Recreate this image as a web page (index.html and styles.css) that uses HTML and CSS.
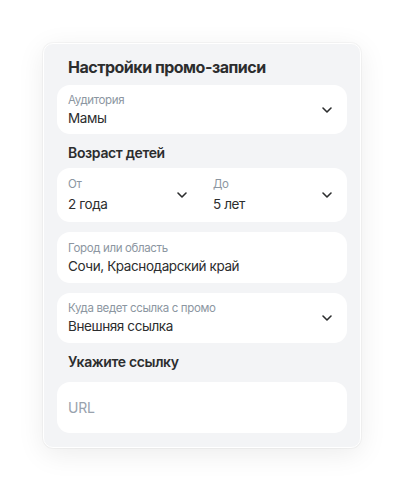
FILE: index.html
```html
<!DOCTYPE html>
<html lang="ru">
<head>
<meta charset="utf-8">
<link rel="stylesheet" href="styles.css">
</head>
<body>
<div class="card">
  <h1 class="title">Настройки промо-записи</h1>
  <div class="field select f-aud">
    <div class="texts">
      <div class="label">Аудитория</div>
      <div class="value">Мамы</div>
    </div>
    <svg class="chev" width="12" height="8" viewBox="0 0 12 8"><path d="M2 2 6 6l4-4" fill="none" stroke="#2c2d2e" stroke-width="1.6" stroke-linecap="round" stroke-linejoin="round"/></svg>
  </div>
  <h2 class="sub s-age">Возраст детей</h2>
  <div class="field row f-age">
    <div class="half">
      <div class="texts">
        <div class="label">От</div>
        <div class="value">2 года</div>
      </div>
      <svg class="chev" width="12" height="8" viewBox="0 0 12 8"><path d="M2 2 6 6l4-4" fill="none" stroke="#2c2d2e" stroke-width="1.6" stroke-linecap="round" stroke-linejoin="round"/></svg>
    </div>
    <div class="half">
      <div class="texts">
        <div class="label">До</div>
        <div class="value">5 лет</div>
      </div>
      <svg class="chev" width="12" height="8" viewBox="0 0 12 8"><path d="M2 2 6 6l4-4" fill="none" stroke="#2c2d2e" stroke-width="1.6" stroke-linecap="round" stroke-linejoin="round"/></svg>
    </div>
  </div>
  <div class="field f-city">
    <div class="texts">
      <div class="label">Город или область</div>
      <div class="value">Сочи, Краснодарский край</div>
    </div>
  </div>
  <div class="field select f-link">
    <div class="texts">
      <div class="label">Куда ведет ссылка с промо</div>
      <div class="value">Внешняя ссылка</div>
    </div>
    <svg class="chev" width="12" height="8" viewBox="0 0 12 8"><path d="M2 2 6 6l4-4" fill="none" stroke="#2c2d2e" stroke-width="1.6" stroke-linecap="round" stroke-linejoin="round"/></svg>
  </div>
  <h2 class="sub s-url">Укажите ссылку</h2>
  <div class="field f-url">
    <div class="placeholder">URL</div>
  </div>
</div>
</body>
</html>
```
FILE: styles.css
```css
* { box-sizing: border-box; }
html, body { margin: 0; padding: 0; background: #ffffff; }
body {
  font-family: Inter, "Noto Sans", sans-serif;
  color: #2c2d2e;
  width: 404px;
  height: 491px;
  padding: 43px 0 0 43px;
}
.card {
  width: 318px;
  height: 405px;
  background: #f3f4f6;
  border: 1px solid #ffffff;
  border-radius: 10px;
  box-shadow: 0 0 0 1px rgba(0,0,0,0.03), 0 6px 28px rgba(0,0,0,0.08);
  padding: 13px 13px 0 13px;
  display: flex;
  flex-direction: column;
}
.title {
  margin: 0 0 0 11px;
  font-size: 16px;
  line-height: 20px;
  font-weight: 700;
  letter-spacing: -0.5px;
}
.sub {
  margin: 0 0 0 11px;
  font-size: 14px;
  line-height: 20px;
  font-weight: 600;
  letter-spacing: -0.35px;
}
.field {
  background: #ffffff;
  border-radius: 13px;
  display: flex;
  align-items: center;
  padding: 0 14px 0 11px;
}
.select { justify-content: space-between; }
.texts { display: flex; flex-direction: column; }
.label {
  font-size: 11.5px;
  line-height: 16px;
  color: #8c96a1;
  letter-spacing: -0.35px;
}
.value {
  font-size: 13.5px;
  line-height: 20px;
  color: #2c2d2e;
  letter-spacing: -0.4px;
}
.chev { display: block; flex: none; }
.f-aud { margin-top: 8px; height: 49px; }
.s-age { margin-top: 9px; }
.f-age { margin-top: 5px; height: 54px; padding: 0; }
.half {
  flex: 1;
  display: flex;
  align-items: center;
  justify-content: space-between;
  padding: 0 14px 0 11px;
}
.half .value { margin-top: 2px; }
.f-city { margin-top: 10px; height: 51px; }
.f-link { margin-top: 10px; height: 50px; }
.s-url { margin-top: 9px; }
.f-url { margin-top: 10px; height: 51px; }
.placeholder {
  font-size: 14px;
  line-height: 20px;
  color: #99a2ad;
  letter-spacing: -0.2px;
}
```
